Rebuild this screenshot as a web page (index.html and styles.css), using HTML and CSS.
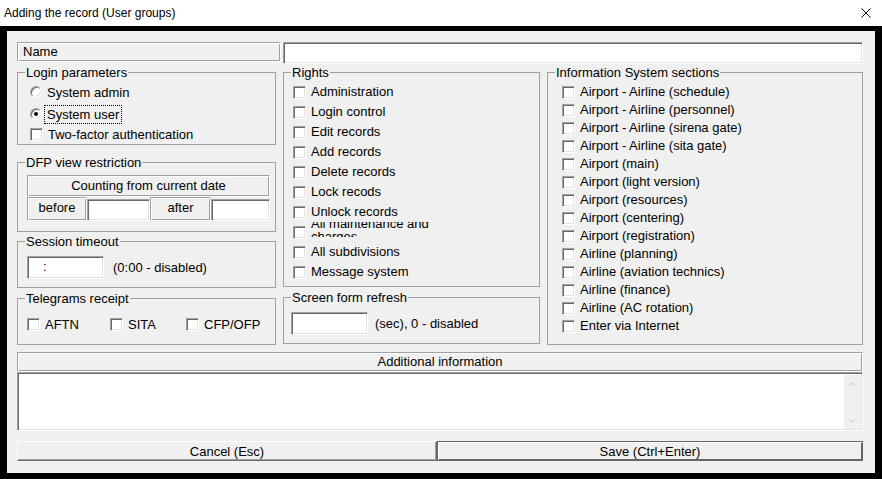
FILE: index.html
```html
<html lang="en">
<head>
  <meta charset="UTF-8" />
  <title>Adding the record (User groups)</title>
  <link rel="stylesheet" href="styles.css">
</head>
<body>
  <div class="titlebar">
    <span>Adding the record (User groups)</span>
    <svg class="close" viewBox="0 0 10 10"><path d="M0.5 0.5L9.5 9.5M9.5 0.5L0.5 9.5" stroke="#000" stroke-width="1" fill="none"/></svg>
  </div>

  <div class="frame">
    <div class="dialog">
      <div class="name-row">
        <div class="cell name-label">Name</div>
        <div class="field name-input"></div>
      </div>

      <div class="columns">
        <div class="col col-left">
          <fieldset class="group login">
            <legend>Login parameters</legend>
            <div class="gbody">
              <div class="opt r1"><span class="radio"></span><span class="lbl">System admin</span></div>
              <div class="opt r2"><span class="radio on"></span><span class="lbl focus">System user</span></div>
              <div class="opt r3"><span class="box"></span><span>Two-factor authentication</span></div>
            </div>
          </fieldset>

          <fieldset class="group dfp">
            <legend>DFP view restriction</legend>
            <div class="gbody">
              <div class="cell dfp-head">Counting from current date</div>
              <div class="dfp-row">
                <div class="cell dfp-before">before</div>
                <div class="field dfp-in1"></div>
                <div class="cell dfp-after">after</div>
                <div class="field dfp-in2"></div>
              </div>
            </div>
          </fieldset>

          <fieldset class="group session">
            <legend>Session timeout</legend>
            <div class="gbody inline">
              <div class="field small-in"><span class="colon">:</span></div>
              <span>(0:00 - disabled)</span>
            </div>
          </fieldset>

          <fieldset class="group telegrams">
            <legend>Telegrams receipt</legend>
            <div class="gbody tg-row">
              <div class="opt tg1"><span class="box"></span><span>AFTN</span></div>
              <div class="opt tg2"><span class="box"></span><span>SITA</span></div>
              <div class="opt"><span class="box"></span><span>CFP/OFP</span></div>
            </div>
          </fieldset>
        </div>

        <div class="col col-mid">
          <fieldset class="group rights">
            <legend>Rights</legend>
            <div class="gbody">
              <div class="opt"><span class="box"></span><span class="txt">Administration</span></div>
              <div class="opt"><span class="box"></span><span class="txt">Login control</span></div>
              <div class="opt"><span class="box"></span><span class="txt">Edit records</span></div>
              <div class="opt"><span class="box"></span><span class="txt">Add records</span></div>
              <div class="opt"><span class="box"></span><span class="txt">Delete records</span></div>
              <div class="opt"><span class="box"></span><span class="txt">Lock recods</span></div>
              <div class="opt"><span class="box"></span><span class="txt">Unlock records</span></div>
              <div class="opt"><span class="box"></span><span class="clip"><span>All maintenance and charges</span></span></div>
              <div class="opt"><span class="box"></span><span class="txt">All subdivisions</span></div>
              <div class="opt"><span class="box"></span><span class="txt">Message system</span></div>
            </div>
          </fieldset>

          <fieldset class="group refresh">
            <legend>Screen form refresh</legend>
            <div class="gbody inline">
              <div class="field small-in"></div>
              <span>(sec), 0 - disabled</span>
            </div>
          </fieldset>
        </div>

        <fieldset class="group sections">
          <legend>Information System sections</legend>
          <div class="gbody">
            <div class="opt"><span class="box"></span><span class="txt">Airport - Airline (schedule)</span></div>
            <div class="opt"><span class="box"></span><span class="txt">Airport - Airline (personnel)</span></div>
            <div class="opt"><span class="box"></span><span class="txt">Airport - Airline (sirena gate)</span></div>
            <div class="opt"><span class="box"></span><span class="txt">Airport - Airline (sita gate)</span></div>
            <div class="opt"><span class="box"></span><span class="txt">Airport (main)</span></div>
            <div class="opt"><span class="box"></span><span class="txt">Airport (light version)</span></div>
            <div class="opt"><span class="box"></span><span class="txt">Airport (resources)</span></div>
            <div class="opt"><span class="box"></span><span class="txt">Airport (centering)</span></div>
            <div class="opt"><span class="box"></span><span class="txt">Airport (registration)</span></div>
            <div class="opt"><span class="box"></span><span class="txt">Airline (planning)</span></div>
            <div class="opt"><span class="box"></span><span class="txt">Airline (aviation technics)</span></div>
            <div class="opt"><span class="box"></span><span class="txt">Airline (finance)</span></div>
            <div class="opt"><span class="box"></span><span class="txt">Airline (AC rotation)</span></div>
            <div class="opt"><span class="box"></span><span class="txt">Enter via Internet</span></div>
          </div>
        </fieldset>
      </div>

      <div class="info">
        <div class="cell info-head">Additional information</div>
        <div class="field info-body">
          <div class="vscroll">
            <svg viewBox="0 0 7 4"><path d="M0.5 3.5L3.5 0.5L6.5 3.5" stroke="#c4c4c4" fill="none"/></svg>
            <svg viewBox="0 0 7 4"><path d="M0.5 0.5L3.5 3.5L6.5 0.5" stroke="#c4c4c4" fill="none"/></svg>
          </div>
        </div>
      </div>

      <div class="buttons">
        <button class="btn cancel">Cancel (Esc)</button>
        <button class="btn default">Save (Ctrl+Enter)</button>
      </div>
    </div>
  </div>
</body>
</html>
```

FILE: styles.css
```css
* {
  box-sizing: border-box;
}

body {
  margin: 0;
  background: #fff;
  color: #000;
  font-family: "Liberation Sans", Arial, sans-serif;
  font-size: 13px;
}

.titlebar {
  height: 26px;
  display: flex;
  align-items: center;
  justify-content: space-between;
  padding: 0 11px 0 4px;
  font-size: 12px;
}

.close {
  width: 10px;
  height: 10px;
}

.frame {
  height: 453px;
  border: solid #000;
  border-width: 5px 7px 6px 7px;
}

.dialog {
  height: 100%;
  background: #f0f0f0;
  padding: 11px 12px 0 10px;
}

/* etched label cell */
.cell {
  background: #f0f0f0;
  border: 1px solid;
  border-color: #a0a0a0 #fff #fff #a0a0a0;
  box-shadow: inset 1px 1px #fff, inset -1px -1px #a0a0a0;
}

/* sunken white edit */
.field {
  background: #fff;
  border: 1px solid;
  border-color: #a0a0a0 #fff #fff #a0a0a0;
  box-shadow: inset 1px 1px #696969, inset -1px -1px #e3e3e3;
}

.name-row {
  display: flex;
  align-items: flex-start;
  gap: 2px;
}

.name-label {
  width: 264px;
  height: 20px;
  padding: 1px 0 0 5px;
  line-height: 16px;
}

.name-input {
  flex: 1;
  height: 22px;
}

.columns {
  display: flex;
  gap: 7px;
  margin-top: 1px;
}

.col {
  display: flex;
  flex-direction: column;
}

.col-left {
  width: 259px;
}

.col-mid {
  width: 257px;
}

.group {
  margin: 0;
  padding: 0;
  min-width: 0;
  border: 1px solid #a0a0a0;
}

.group legend {
  margin-left: 7px;
  padding: 0 1px;
  line-height: 15px;
}

.opt {
  display: flex;
  align-items: center;
  height: 20px;
  white-space: nowrap;
}

.txt {
  padding-bottom: 2px;
}

.box {
  flex: none;
  width: 13px;
  height: 13px;
  margin-right: 5px;
  background: #fff;
  border: 1px solid;
  border-color: #a0a0a0 #fff #fff #a0a0a0;
  box-shadow: inset 1px 1px #696969, inset -1px -1px #e3e3e3;
}

.radio {
  flex: none;
  width: 12px;
  height: 12px;
  margin-right: 4px;
  border-radius: 50%;
  background: #fff;
  border: 1px solid;
  border-color: #a0a0a0 #fff #fff #a0a0a0;
  box-shadow: inset 1px 1px #696969, inset -1px -1px #e3e3e3;
  display: flex;
  align-items: center;
  justify-content: center;
}

.radio.on::after {
  content: "";
  width: 4px;
  height: 4px;
  border-radius: 50%;
  background: #000;
}

.lbl {
  padding: 0 1px;
  line-height: 15px;
}

.lbl.focus {
  outline: 1px dotted #000;
  outline-offset: 1px;
}

/* login parameters */
.login .gbody {
  padding: 3px 0 1px 12px;
}

.login .opt {
  height: 18px;
}

.login .r2 {
  margin-top: 4px;
}

.login .r3 {
  margin-top: 2px;
}

/* DFP */
.dfp {
  margin-top: 10px;
}

.dfp .gbody {
  padding: 5px 5px 10px 9px;
}

.dfp-head {
  height: 22px;
  text-align: center;
  line-height: 18px;
  padding-top: 1px;
}

.dfp-row {
  display: flex;
  height: 24px;
}

.dfp-row .cell {
  text-align: center;
  line-height: 20px;
}

.dfp-before {
  width: 60px;
}

.dfp-after {
  width: 61px;
}

.dfp-row .field {
  margin-top: 2px;
}

.dfp-in1 {
  width: 63px;
}

.dfp-in2 {
  width: 59px;
}

/* session / refresh */
.session {
  margin-top: 2px;
}

.session .gbody {
  padding: 7px 0 8px 9px;
}

.inline {
  display: flex;
  align-items: center;
  gap: 9px;
}

.small-in {
  width: 77px;
  height: 23px;
  padding-left: 15px;
  line-height: 20px;
}

/* telegrams */
.telegrams {
  margin-top: 3px;
}

.tg-row {
  display: flex;
  padding: 10px 0 11px 9px;
}

.tg-row .opt {
  height: 17px;
}

.tg1 {
  width: 83px;
}

.tg2 {
  width: 76px;
}

/* rights */
.rights .gbody {
  padding: 2px 0 4px 9px;
}

.clip {
  display: flex;
  align-items: center;
  width: 135px;
  height: 15px;
  margin-top: -5px;
  overflow: hidden;
  white-space: normal;
}

.clip span {
  line-height: 13px;
}

.refresh {
  margin-top: 3px;
}

.refresh .gbody {
  padding: 7px 0 8px 7px;
  gap: 7px;
}

/* sections */
.sections {
  width: 316px;
}

.sections .gbody {
  padding: 3px 0 8px 14px;
}

.sections .opt {
  height: 18px;
}

/* additional information */
.info {
  margin-top: 7px;
}

.info-head {
  height: 20px;
  text-align: center;
  line-height: 17px;
}

.info-body {
  height: 59px;
  display: flex;
  justify-content: flex-end;
  padding: 2px 1px 1px 0;
}

.vscroll {
  width: 17px;
  background: #f0f0f0;
  display: flex;
  flex-direction: column;
  justify-content: space-between;
  align-items: center;
  padding: 7px 0 6px;
}

.vscroll svg {
  width: 7px;
  height: 4px;
}

/* buttons */
.buttons {
  display: flex;
  margin-top: 10px;
}

.btn {
  height: 20px;
  padding: 0;
  font: inherit;
  color: #000;
  background: #f0f0f0;
  border: 1px solid;
  border-color: #fff #696969 #696969 #fff;
  box-shadow: inset -1px -1px #a0a0a0;
}

.cancel {
  width: 420px;
}

.default {
  flex: 1;
  border-color: #646464;
  box-shadow: inset 1px 1px #fff, inset -1px -1px #646464;
}
```
